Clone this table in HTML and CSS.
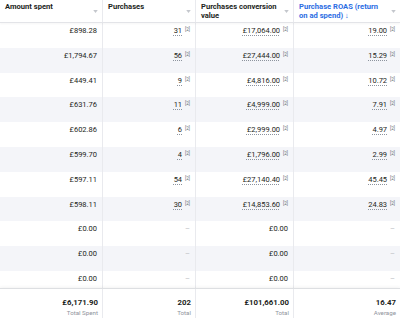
FILE: index.html
```html
<!DOCTYPE html>
<html>
<head>
<meta charset="utf-8">
<link rel="stylesheet" href="styles.css">
</head>
<body>
<div class="table">
  <div class="head row">
    <div class="cell"><span class="htext">Amount spent</span><svg class="sort" viewBox="0 0 6 4"><path d="M0 0h6L3 4z"/></svg></div>
    <div class="cell"><span class="htext">Purchases</span><svg class="sort" viewBox="0 0 6 4"><path d="M0 0h6L3 4z"/></svg></div>
    <div class="cell"><span class="htext">Purchases conversion value</span><svg class="sort" viewBox="0 0 6 4"><path d="M0 0h6L3 4z"/></svg></div>
    <div class="cell"><span class="htext active">Purchase ROAS (return on ad spend) ↓</span><svg class="sort" viewBox="0 0 6 4"><path d="M0 0h6L3 4z"/></svg></div>
  </div>
  <div class="body">
    <div class="row"><div class="cell">£898.28</div><div class="cell"><a class="v">31</a><sup>[2]</sup></div><div class="cell"><a class="v">£17,064.00</a><sup>[2]</sup></div><div class="cell"><a class="v">19.00</a><sup>[2]</sup></div></div>
    <div class="row"><div class="cell">£1,794.67</div><div class="cell"><a class="v">56</a><sup>[2]</sup></div><div class="cell"><a class="v">£27,444.00</a><sup>[2]</sup></div><div class="cell"><a class="v">15.29</a><sup>[2]</sup></div></div>
    <div class="row"><div class="cell">£449.41</div><div class="cell"><a class="v">9</a><sup>[2]</sup></div><div class="cell"><a class="v">£4,816.00</a><sup>[2]</sup></div><div class="cell"><a class="v">10.72</a><sup>[2]</sup></div></div>
    <div class="row"><div class="cell">£631.76</div><div class="cell"><a class="v">11</a><sup>[2]</sup></div><div class="cell"><a class="v">£4,999.00</a><sup>[2]</sup></div><div class="cell"><a class="v">7.91</a><sup>[2]</sup></div></div>
    <div class="row"><div class="cell">£602.86</div><div class="cell"><a class="v">6</a><sup>[2]</sup></div><div class="cell"><a class="v">£2,999.00</a><sup>[2]</sup></div><div class="cell"><a class="v">4.97</a><sup>[2]</sup></div></div>
    <div class="row"><div class="cell">£599.70</div><div class="cell"><a class="v">4</a><sup>[2]</sup></div><div class="cell"><a class="v">£1,796.00</a><sup>[2]</sup></div><div class="cell"><a class="v">2.99</a><sup>[2]</sup></div></div>
    <div class="row"><div class="cell">£597.11</div><div class="cell"><a class="v">54</a><sup>[2]</sup></div><div class="cell"><a class="v">£27,140.40</a><sup>[2]</sup></div><div class="cell"><a class="v">45.45</a><sup>[2]</sup></div></div>
    <div class="row"><div class="cell">£598.11</div><div class="cell"><a class="v">30</a><sup>[2]</sup></div><div class="cell"><a class="v">£14,853.60</a><sup>[2]</sup></div><div class="cell"><a class="v">24.83</a><sup>[2]</sup></div></div>
    <div class="row"><div class="cell">£0.00</div><div class="cell dash">–</div><div class="cell">£0.00</div><div class="cell dash">–</div></div>
    <div class="row"><div class="cell">£0.00</div><div class="cell dash">–</div><div class="cell">£0.00</div><div class="cell dash">–</div></div>
    <div class="row"><div class="cell">£0.00</div><div class="cell dash">–</div><div class="cell">£0.00</div><div class="cell dash">–</div></div>
  </div>
  <div class="foot row">
    <div class="cell"><b>£6,171.90</b><span>Total Spent</span></div>
    <div class="cell"><b>202</b><span>Total</span></div>
    <div class="cell"><b>£101,661.00</b><span>Total</span></div>
    <div class="cell"><b>16.47</b><span>Average</span></div>
  </div>
</div>
</body>
</html>
```

FILE: styles.css
```css
html, body {
  margin: 0;
  padding: 0;
  background: #fff;
}
body {
  font-family: Roboto, "Liberation Sans", Arial, sans-serif;
  font-size: 7.5px;
  color: #1c1e21;
}
.table {
  width: 400px;
  height: 318px;
  display: flex;
  flex-direction: column;
  overflow: hidden;
}
.row {
  display: grid;
  grid-template-columns: 103px 93px 98px 106px;
  flex: none;
}
.cell {
  box-sizing: border-box;
  border-right: 1px solid #e9eaee;
  display: flex;
  justify-content: flex-end;
  align-items: flex-start;
  padding: 3px 5px 0 4px;
  line-height: 9px;
  white-space: nowrap;
}
.cell:last-child { border-right: none; }
.head {
  height: 22px;
  border-bottom: 1px solid #e3e4e8;
  box-shadow: 0 1px 2px rgba(0,0,0,0.04);
  position: relative;
  z-index: 1;
}
.head .cell {
  justify-content: space-between;
  align-items: flex-start;
  padding: 2px 4px 0 5px;
  white-space: normal;
  font-weight: 700;
  font-size: 7.6px;
}
.htext { max-width: 82px; }
.htext.active { color: #2b6de3; }
.sort {
  width: 5px;
  height: 3px;
  fill: #c4c7cd;
  margin-top: 8px;
  flex: none;
}
.body {
  flex: 1;
  overflow: hidden;
}
.body .row { height: 24.8px; }
.body .row:nth-child(even) { background: #f4f5f9; }
.v {
  color: #1c1e21;
  text-decoration: underline dotted #8d949e;
  text-underline-offset: 1.5px;
}
sup {
  font-size: 4.5px;
  line-height: 5px;
  color: #606770;
  margin-left: 3px;
  margin-top: 1px;
}
.dash { color: #bcc0c4; padding-right: 5px; }
.foot {
  height: 29px;
  border-top: 1px solid #dddfe2;
  box-shadow: 0 -1px 3px rgba(0,0,0,0.05);
  background: #fff;
  position: relative;
}
.foot .cell {
  flex-direction: column;
  align-items: flex-end;
  padding: 5px 4px 0 4px;
}
.foot b { font-weight: 700; font-size: 7.8px; line-height: 10px; }
.foot span { color: #90949c; font-size: 6.2px; line-height: 10px; }
```
